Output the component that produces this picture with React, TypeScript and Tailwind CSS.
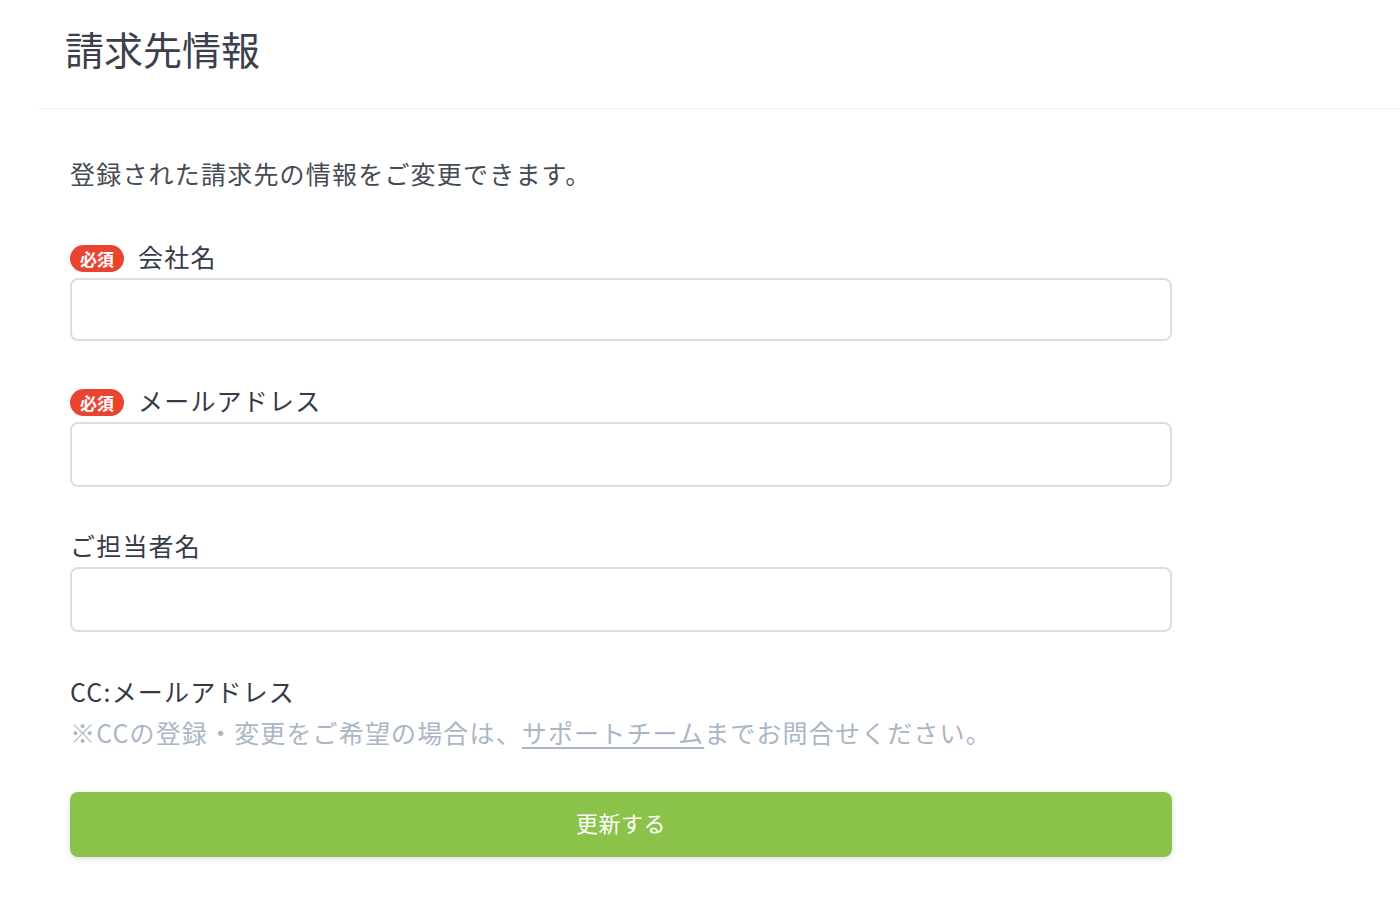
import React from "react";

const font = { fontFamily: '"Noto Sans CJK JP", "Noto Sans", sans-serif' };

function Badge() {
  return (
    <span className="inline-flex h-[27px] w-[54px] items-center justify-center rounded-full bg-[#ea4431] text-[17px] font-bold leading-none text-white">
      必須
    </span>
  );
}

function Field({
  label,
  required,
  mt,
  h,
}: {
  label: string;
  required?: boolean;
  mt: string;
  h: string;
}) {
  return (
    <div className={mt}>
      <div className="flex h-[36px] items-center gap-[14px]">
        {required && <Badge />}
        <span className="pb-[5px] text-[25px] leading-[36px] tracking-[1.2px] text-[#353b47]">{label}</span>
      </div>
      <input
        type="text"
        className={`mt-[2px] block w-[1102px] rounded-lg border-2 border-[#dadee3] bg-white outline-none ${h}`}
      />
    </div>
  );
}

export default function App() {
  return (
    <div className="min-h-[923px] w-[1400px] bg-white" style={font}>
      <div className="ml-[37px] h-[109px] border-b border-[#f2f2f2]">
        <h1 className="pl-[28px] pt-[20px] text-[39px] font-normal leading-[57px] text-[#3b404c]">請求先情報</h1>
      </div>
      <div className="pl-[70px]">
        <p className="mt-[46px] text-[25px] leading-[36px] tracking-[1.2px] text-[#464a52]">
          登録された請求先の情報をご変更できます。
        </p>
        <Field label="会社名" required mt="mt-[49px]" h="h-[63px]" />
        <Field label="メールアドレス" required mt="mt-[43px]" h="h-[65px]" />
        <Field label="ご担当者名" mt="mt-[42px]" h="h-[65px]" />
        <div className="mt-[41px]">
          <div className="pb-[3px] text-[25px] leading-[36px] tracking-[1.2px] text-[#353b47]">CC:メールアドレス</div>
          <p className="mt-[2px] text-[25px] leading-[36px] tracking-[1.15px] text-[#aab6c5]">
            ※CCの登録・変更をご希望の場合は、
            <a href="#" className="underline underline-offset-4">サポートチーム</a>
            までお問合せください。
          </p>
        </div>
        <button
          type="button"
          className="mt-[42px] flex h-[65px] w-[1102px] items-center justify-center rounded-lg bg-[#8bc34a] text-[22px] tracking-[0.5px] text-white shadow-[0_2px_6px_rgba(0,0,0,0.12)]"
        >
          <span className="pb-[4px]">更新する</span>
        </button>
      </div>
    </div>
  );
}
